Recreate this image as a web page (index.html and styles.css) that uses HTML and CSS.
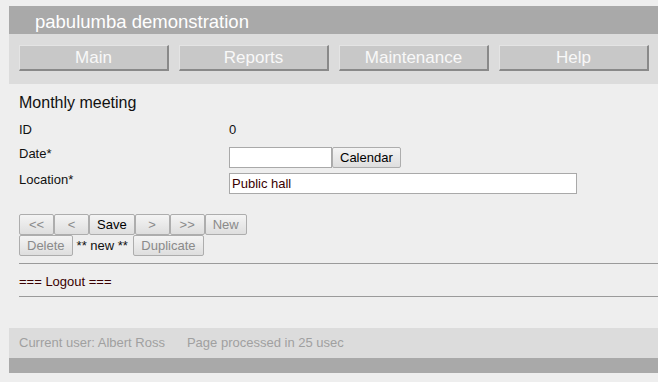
FILE: index.html
```html
<!DOCTYPE html>
<html lang="en">
<head>
<meta charset="utf-8">
<title>pabulumba demonstration</title>
<link rel="stylesheet" href="styles.css">
</head>
<body>
<div class="page">
  <header class="top">pabulumba demonstration</header>
  <nav class="menu">
    <a class="menu-btn">Main</a>
    <a class="menu-btn">Reports</a>
    <a class="menu-btn">Maintenance</a>
    <a class="menu-btn">Help</a>
  </nav>
  <main class="content">
    <h1 class="heading">Monthly meeting</h1>
    <div class="form">
      <div class="label">ID</div>
      <div class="value">0</div>
      <div class="label">Date*</div>
      <div class="value field-row"><input class="input date" type="text" value=""><button class="btn">Calendar</button></div>
      <div class="label">Location*</div>
      <div class="value field-row"><input class="input location" type="text" value="Public hall"></div>
    </div>
    <div class="actions">
      <div class="action-row"><button class="btn small" disabled>&lt;&lt;</button><button class="btn small" disabled>&lt;</button><button class="btn">Save</button><button class="btn small" disabled>&gt;</button><button class="btn small" disabled>&gt;&gt;</button><button class="btn" disabled>New</button></div>
      <div class="action-row"><button class="btn" disabled>Delete</button><span class="state">** new **</span><button class="btn wide" disabled>Duplicate</button></div>
    </div>
    <div class="rule"></div>
    <div class="logout"><a class="logout-link">=== Logout ===</a></div>
    <div class="rule"></div>
  </main>
  <footer class="foot">
    <div class="foot-info"><span>Current user: Albert Ross</span><span>Page processed in 25 usec</span></div>
    <div class="foot-bar"></div>
  </footer>
</div>
</body>
</html>
```
FILE: styles.css
```css
html, body {
  margin: 0;
  padding: 0;
  background: #eeeeee;
}
body {
  font-family: "Liberation Sans", Arial, sans-serif;
  font-size: 13px;
  color: #111;
}
.page {
  padding-top: 6px;
  margin-left: 9px;
}
.top {
  box-sizing: border-box;
  height: 28px;
  padding: 4px 0 0 26px;
  line-height: 24px;
  font-size: 18.5px;
  color: #ffffff;
  background: #a9a9a9;
}
.menu {
  display: flex;
  gap: 10px;
  padding: 11px 0 13px 10px;
  background: #dcdcdc;
}
.menu-btn {
  box-sizing: border-box;
  width: 150px;
  height: 26px;
  border-style: solid;
  border-width: 1px 2px 2px 1px;
  border-color: #e4e4e4 #898989 #898989 #e4e4e4;
  background: #c8c8c8;
  color: #f8f8f8;
  font-size: 17px;
  line-height: 23px;
  text-align: center;
}
.content {
  padding-left: 10px;
}
.heading {
  margin: 10px 0 0;
  font-size: 16px;
  font-weight: normal;
  line-height: 18px;
  color: #111;
}
.form {
  display: grid;
  grid-template-columns: 210px auto;
  grid-template-rows: 19px 21px 21px;
  row-gap: 5px;
  margin-top: 11px;
}
.label, .value {
  line-height: 13px;
}
.field-row {
  display: flex;
  align-items: flex-start;
}
.input {
  box-sizing: border-box;
  height: 21px;
  margin: 0;
  padding: 0 2px;
  border: 1px solid #a9a9a9;
  background: #ffffff;
  font-family: "Liberation Sans", Arial, sans-serif;
  font-size: 13px;
  color: #3a0000;
  outline: none;
}
.date {
  width: 103px;
}
.location {
  width: 348px;
}
.btn {
  box-sizing: border-box;
  height: 21px;
  margin: 0;
  padding: 0 7px;
  border: 1px solid #adadad;
  border-radius: 2px;
  background: linear-gradient(#f4f4f4, #dedede);
  font-family: "Liberation Sans", Arial, sans-serif;
  font-size: 13px;
  color: #000;
}
.btn:disabled {
  color: #8a8a8a;
}
.small {
  min-width: 35px;
}
.wide {
  min-width: 71px;
}
.actions {
  margin-top: 20px;
}
.action-row {
  display: flex;
  align-items: center;
}
.state {
  padding: 0 5px 0 4px;
  color: #111;
}
.rule {
  height: 0;
  border-top: 1px solid #9a9a9a;
}
.actions + .rule {
  margin-top: 7px;
}
.logout {
  padding: 10px 0 7px;
  line-height: 15px;
}
.logout-link {
  color: #3a0000;
  text-decoration: none;
}
.foot {
  margin-top: 31px;
}
.foot-info {
  display: flex;
  gap: 22px;
  height: 30px;
  padding-left: 10px;
  line-height: 30px;
  color: #a0a0a0;
  background: #dcdcdc;
}
.foot-bar {
  height: 15px;
  background: #a9a9a9;
}
```
